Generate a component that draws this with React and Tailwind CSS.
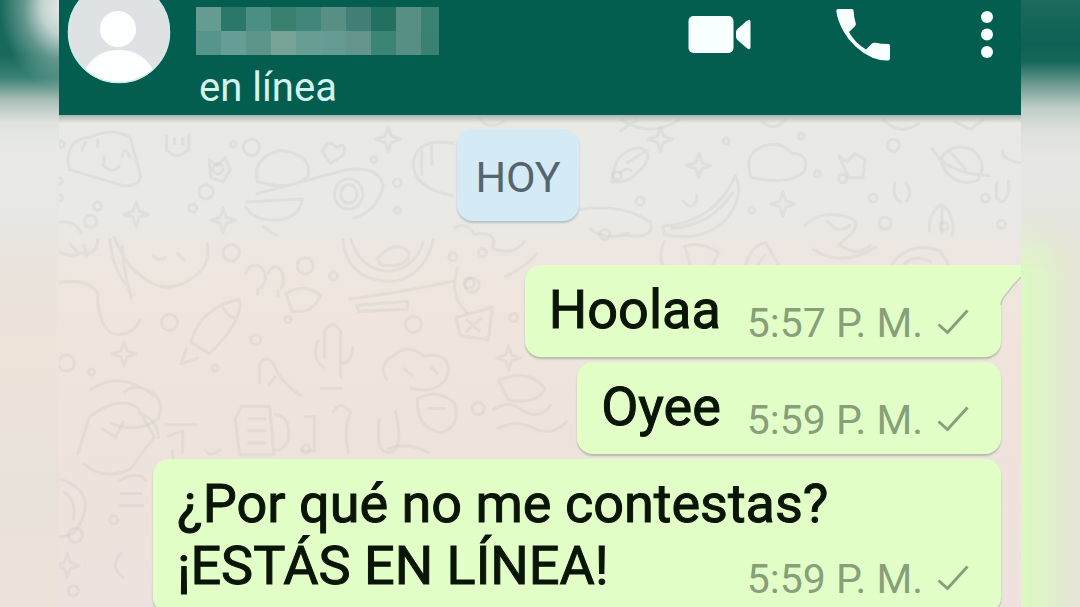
const messages = [
  { lines: ["Hoolaa"], time: "5:57 P. M.", tail: true },
  { lines: ["Oyee"], time: "5:59 P. M." },
  { lines: ["¿Por qué no me contestas?", "¡ESTÁS EN LÍNEA!"], time: "5:59 P. M.", wide: true },
];

// pixelated contact name, one colour per block
const nameBlocks = [
  ["bg-[#659c92]", "bg-[#2a786a]", "bg-[#4a8f81]", "bg-[#39806f]", "bg-[#428579]", "bg-[#588f84]", "bg-[#437e77]", "bg-[#22705f]", "bg-[#578f84]", "bg-[#3a8373]"],
  ["bg-[#57958a]", "bg-[#669d95]", "bg-[#5e958a]", "bg-[#77a397]", "bg-[#689d94]", "bg-[#659b93]", "bg-[#64958d]", "bg-[#3c8474]", "bg-[#588f85]", "bg-[#3b8171]"],
];

function Check() {
  return (
    <svg viewBox="0 0 32 26" className="mb-2 h-[26px] w-8 shrink-0" fill="none" aria-hidden="true">
      <path d="M1.5 15.5 L10.5 23.5 L30.5 1.5" stroke="#87a079" strokeWidth="3" />
    </svg>
  );
}

function Avatar() {
  return (
    <svg viewBox="0 0 104 104" className="h-[104px] w-[104px] shrink-0" role="img" aria-label="Avatar">
      <defs>
        <clipPath id="avatar">
          <circle cx="52" cy="52" r="51" />
        </clipPath>
      </defs>
      <circle cx="52" cy="52" r="51" fill="#dfe2e5" />
      <g clipPath="url(#avatar)" fill="#fdfefe">
        <circle cx="51" cy="49" r="18" />
        <path d="M17 92 C24 77 36 70 52 70 C68 70 80 77 87 92 L89 106 H17 Z" />
      </g>
      <circle cx="52" cy="52" r="50.5" fill="none" stroke="#cfeae6" strokeWidth="1.5" />
    </svg>
  );
}

function Header() {
  return (
    <header className="relative flex h-[115px] shrink-0 items-end overflow-hidden bg-[#045e50] pl-2">
      <div className="pb-[31px]">
        <Avatar />
      </div>
      <div className="ml-[25px] pb-0.5">
        <div className="w-[243px]">
          {nameBlocks.map((row, i) => (
            <div key={i} className="grid h-6 grid-cols-[repeat(9,25px)_1fr]">
              {row.map((color, j) => (
                <span key={j} className={color} />
              ))}
            </div>
          ))}
        </div>
        <p className="mt-2 ml-[3px] text-[40px] leading-[50px] text-[#d3f3ec]">en línea</p>
      </div>
      <div className="ml-auto flex h-[115px] items-start text-[#f8ffff]">
        <button type="button" aria-label="Videollamada" className="mt-3.5">
          <svg viewBox="0 0 64 42" className="h-[42px] w-16" fill="currentColor">
            <rect x="0.5" y="2" width="45" height="37" rx="5" />
            <path d="M48 18 Q48 16.500 49.500 15 L58 7.500 Q62.500 4 62.500 8 V33 Q62.500 37 58 33.500 L49.500 26 Q48 24.500 48 23 Z" />
          </svg>
        </button>
        <button type="button" aria-label="Llamar" className="mt-2 ml-[83px]">
          <svg viewBox="0 0 56 54" className="h-[54px] w-14" fill="currentColor">
            <path d="M3 1 H17 Q18.500 1 18.600 3 Q19 10 20.700 15 Q21.200 17 20 18.200 L14 24 Q20 35 31 41.500 L37 35.500 Q38.500 34.300 40.500 34.800 Q46 36 53.500 36 Q55 36 55 37.500 V50.500 Q55 52.500 53 52.500 Q45 52.800 37.500 49.800 Q28 45.500 20.500 38.500 Q13 31.500 8.800 23.700 Q2.500 13 1.300 3 Q1.300 1 3 1 Z" />
          </svg>
        </button>
        <button type="button" aria-label="Más opciones" className="mt-2.5 mr-[26px] ml-[88px]">
          <svg viewBox="0 0 16 50" className="h-[50px] w-4" fill="currentColor">
            <circle cx="8" cy="7" r="6" />
            <circle cx="8" cy="24.500" r="6" />
            <circle cx="8" cy="42" r="6" />
          </svg>
        </button>
      </div>
    </header>
  );
}

const dots = [
  [8, 29, 3], [6, 65, 3], [44, 90, 4], [178, 29, 3], [138, 92, 4], [163, 53, 5], [6, 82, 3], [317, 44, 3], [340, 67, 4], [277, 159, 4],
  [340, 94, 3], [196, 32, 8], [151, 76, 7], [249, 149, 8], [176, 136, 8], [37, 105, 6], [115, 205, 8], [13, 245, 8], [38, 254, 3], [200, 222, 5],
  [356, 207, 8], [411, 166, 5], [424, 136, 4], [739, 21, 3], [780, 63, 4], [830, 30, 6], [921, 82, 4], [822, 107, 6], [580, 85, 4], [545, 118, 5],
  [755, 58, 3], [810, 82, 4], [665, 26, 3], [880, 110, 4], [937, 108, 4], [690, 94, 3], [557, 60, 4], [414, 168, 7], [455, 200, 4], [395, 140, 4],
  [300, 345, 4], [22, 415, 7], [20, 470, 5], [60, 400, 4], [250, 330, 4], [420, 290, 6], [160, 250, 3], [232, 202, 3],
];

const stars = [
  [168, 104], [331, 24], [82, 98], [638, 50], [721, 88], [600, 24], [70, 236], [450, 240], [14, 445],
];

const doodles = [
  // taco, cat and food on the left
  "M16 54 Q10 24 36 22 Q58 12 76 22 L86 58 Q88 70 70 70 Z M28 36 L32 26 M44 32 V24 M68 42 Q70 28 76 42 M48 48 Q58 60 66 50 M50 40 V48",
  "M112 20 V34 Q122 46 134 34 V18 M120 22 V30 M128 22 V30",
  "M154 44 L162 50 L170 42 L175 54 L168 66 L156 62 Z",
  // pan and round plate
  "M202 66 Q196 42 224 35 Q256 38 252 60 Q236 76 202 66 Z M190 86 L246 83 Q244 102 220 104 Q196 104 190 90 M200 78 L290 54 Q322 50 326 70 Q320 96 296 102 M207 110 L222 120",
  "M278 78 a14 15 0 1 0 28 0 a14 15 0 1 0 -28 0 M284 78 a8 9 0 1 0 16 0 a8 9 0 1 0 -16 0",
  "M266 36 Q272 22 280 32 Q292 26 286 40 L274 48 Z",
  "M396 28 Q360 22 356 46 Q354 72 396 80 M364 34 V60 M374 30 V50",
  // animals in the second row
  "M6 106 Q24 104 28 118 M2 130 Q12 144 28 136 Q44 140 44 122 M16 126 L26 138 M34 140 L30 128",
  "M60 120 Q72 150 86 158 Q112 182 142 158 Q156 146 152 126 M98 138 Q104 146 112 140 M122 136 L130 144 M68 128 Q70 160 78 182 M56 122 Q58 150 72 168",
  "M190 158 a10 12 0 1 1 12 14 M212 158 a8 12 0 1 1 12 14 M202 172 V178 M222 172 V180",
  "M286 122 Q290 166 338 164 Q368 158 376 122 M294 122 Q304 156 336 154 Q360 148 366 124 M320 142 Q338 122 352 136 Q350 152 324 148 Z",
  "M230 176 Q250 166 264 178 Q258 196 236 194 Z M292 182 Q340 176 396 164 M300 188 L350 184 V192 L302 194 Z",
  // rocket and snake
  "M2 166 Q34 160 44 176 Q44 206 58 216 Q78 220 86 202",
  "M136 224 Q146 190 184 182 Q188 204 154 236 Z M168 190 Q174 202 182 200 M132 230 L126 246 L144 240",
  "M204 266 V246 Q210 236 218 246 Q224 264 246 278 M212 268 L220 258",
  // cactus
  "M268 240 V214 Q276 200 284 214 V260 M262 222 Q254 240 268 250 M284 246 Q296 244 296 228 M286 270 H264",
  "M330 262 Q320 246 336 238 Q350 224 366 238 Q394 234 390 256 Q384 276 352 270 M346 250 L356 258 M372 248 L380 256",
  "M36 272 Q60 254 88 270 Q112 276 104 300 Q84 316 56 304 M70 274 Q84 262 100 278",
  // bottom band: trumpet, mug, bottle, bell
  "M24 336 L36 298 Q66 276 84 290 L100 318 L76 350 Q48 362 30 344 M48 310 L62 318 L70 302 M84 294 Q104 300 104 320",
  "M110 306 H142 M112 318 L128 312 L128 334 M118 330 V346",
  "M180 300 L186 288 H214 L218 336 H184 Z M192 300 H210 M192 312 H210 M192 324 H210 M218 296 Q236 296 232 322 Q226 334 218 330",
  "M248 298 H258 V332 H244 M276 294 Q284 280 294 294 Q286 310 292 334",
  "M322 300 Q318 340 336 332 Q346 324 338 292 M360 280 Q380 270 396 284 Q404 306 384 314 Q358 310 360 280 Z M370 290 H388",
  "M434 292 Q450 280 464 292 Q482 302 492 286 M438 310 Q458 300 476 310 Q494 318 508 302",
  "M8 360 Q38 370 30 396 Q22 420 4 416 M10 372 Q24 380 20 400 M64 362 Q86 350 92 362 M66 374 H88 M64 386 H90 M68 432 Q54 446 70 458",
  // planets, cloud and banana on the right
  "M552 66 Q554 34 580 32 Q596 40 578 56 Q568 68 552 66 Z M566 48 L588 34 M560 58 Q566 50 572 56",
  "M690 62 Q680 38 704 30 Q720 26 730 38 Q748 38 742 56 Q728 70 690 62 Z",
  "M602 110 Q654 106 674 60 Q684 80 664 104 Q640 126 604 118 Z M610 112 Q650 110 672 76",
  "M622 84 Q630 96 636 84 V78 M776 40 L784 46 L792 38 L802 44 L800 62 H786 Z",
  "M876 44 Q888 26 908 34 Q924 48 914 64 Q896 72 882 56 Z M868 32 Q880 58 926 60 M886 36 L902 54",
  "M938 34 Q936 46 962 48 M932 66 V82 Q940 92 944 74 V64 M832 66 Q828 82 838 86 M842 66 Q850 78 842 86",
  "M742 110 Q756 94 782 100 Q800 104 788 118 L776 128 Q796 142 808 128 M750 132 Q778 152 814 130 M764 104 Q776 120 788 108",
  "M866 116 Q864 96 878 88 Q892 100 888 120 M878 90 V118",
  "M516 94 Q560 86 590 106 Q596 124 560 118 M530 112 Q548 126 570 116",
  "M604 124 Q596 144 606 152 M624 130 Q638 124 658 136 L650 150 H630 Z M684 150 Q688 130 704 126 L718 150 M694 150 L704 138",
  "M828 148 Q846 124 876 134 L886 150 M840 148 Q852 136 868 146",
  "M420 2 Q430 16 446 6 M560 4 Q590 24 620 4 M560 16 L578 4 M700 6 Q712 18 724 4 M820 4 Q836 22 856 8 M890 6 L906 14 L920 4",
  "M396 112 Q408 104 416 118 Q440 114 434 132 Q456 140 466 124 M400 150 Q390 180 410 196 M446 160 Q468 150 478 136",
  "M398 200 L434 190 L430 222 L402 218 Z M408 202 L422 214 M424 200 L408 214",
  "M330 330 Q350 322 372 334 M150 330 Q154 340 166 330 M440 262 Q470 250 486 270 Q480 286 450 282 Z",
];

function Wallpaper() {
  return (
    <svg
      viewBox="0 0 962 492"
      preserveAspectRatio="xMidYMin slice"
      className="absolute inset-0 h-full w-full"
      fill="none"
      stroke="#b9bdb8"
      strokeOpacity="0.2"
      strokeWidth="3"
      strokeLinejoin="round"
      aria-hidden="true"
    >
      {doodles.map((d, i) => (
        <path key={i} d={d} />
      ))}
      {dots.map(([x, y, r], i) => (
        <circle key={i} cx={x} cy={y} r={r} />
      ))}
      {stars.map(([x, y], i) => (
        <path key={i} d={`M${x} ${y - 12} l3 9 l9 3 l-9 3 l-3 9 l-3 -9 l-9 -3 l9 -3 z`} />
      ))}
    </svg>
  );
}

function Message({ lines, time, tail, wide }) {
  const first = lines.slice(0, -1);
  const last = lines[lines.length - 1];
  return (
    <li
      className={`relative rounded-2xl bg-[#e1ffc7] pt-3.5 pr-8 pb-3.5 pl-6 shadow-[0_2px_2px_#b4bba9] ${
        wide ? "w-[90%]" : ""
      }`}
    >
      {tail && (
        <svg viewBox="0 0 40 40" className="absolute top-0 -right-5 h-10 w-10" aria-hidden="true">
          <path d="M0 0 H40 V11 Q33 19 28 26 Q20 34 20 40 H0 Z" fill="#e1ffc7" />
          <path d="M40 12 Q33 19 28 26 Q20 34 20 40" fill="none" stroke="#c3cbb6" strokeWidth="1.500" />
        </svg>
      )}
      {first.map((line) => (
        <p key={line} className="[-webkit-text-stroke:1px_#0a1408]">{line}</p>
      ))}
      <div className="flex items-end justify-between gap-[26px]">
        <p className="pb-0.5 [-webkit-text-stroke:1px_#0a1408]">{last}</p>
        <div className="flex items-end gap-3.5">
          <time className="text-[41px] leading-10 text-[#87a079]">{time}</time>
          <Check />
        </div>
      </div>
    </li>
  );
}

export default function App() {
  return (
    <div className="flex h-screen overflow-hidden font-['Roboto',sans-serif]">
      {/* blurred left edge */}
      <div className="relative w-[59px] shrink-0 overflow-hidden bg-[linear-gradient(180deg,#17695c_0px,#17695c_55px,#3b8275_78px,#a9beb7_100px,#dfe2de_122px,#e8e9e4_150px,#e7e7e4_215px,#ebe4dc_270px,#ede4da_350px,#e9e2d9_500px,#ede3da_607px)]">
        <div className="absolute inset-x-0 top-0 h-24 bg-[radial-gradient(ellipse_64px_84px_at_64px_6px,#eceeee_0%,#dfe5e4d9_35%,#a5bfb980_65%,#5e948a00_100%)]" />
      </div>

      <main className="flex min-w-0 flex-1 flex-col">
        <Header />
        <section className="relative flex-1 bg-[linear-gradient(180deg,#e8e8e4_0px,#e9e9e7_100px,#ede6e0_140px,#efe5dc_200px,#eee4dc_300px,#ede2dd_492px)]">
          <div className="absolute inset-0 overflow-hidden">
            <Wallpaper />
            <div className="absolute inset-x-0 top-0 h-2 bg-linear-to-b from-[#a9b5b0] to-transparent" />
          </div>
          <div className="relative flex flex-col items-center pt-3.5 pr-11">
            <p className="rounded-2xl bg-[#d4eaf5] px-[18px] pt-6 pb-5 text-[43px] leading-[48px] text-[#54656f] shadow-[0_2px_2px_#b9c2c6]">
              HOY
            </p>
          </div>
          <ul className="relative mt-11 flex flex-col items-end gap-[5px] pr-5 text-[54px] leading-[62px] text-[#0a1408]">
            {messages.map((m, i) => (
              <Message key={i} {...m} />
            ))}
          </ul>
        </section>
      </main>

      {/* blurred right edge */}
      <div className="relative w-[59px] shrink-0 bg-[linear-gradient(180deg,#1b6b5e_0px,#0d6154_45px,#17685b_62px,#6f9c92_85px,#c0cdc8_108px,#dce0dc_130px,#e6e7e4_160px,#e6e6e1_215px,#e7e4d8_260px,#e7e5d6_607px)]">
        <div className="absolute inset-x-0 top-[215px] bottom-0 bg-[linear-gradient(90deg,#dcf8c4_0px,#dff3c8_22px,#e4ead0_40px,#e8e6d8_59px)] mask-[linear-gradient(180deg,transparent_0px,black_60px)]" />
      </div>
    </div>
  );
}
